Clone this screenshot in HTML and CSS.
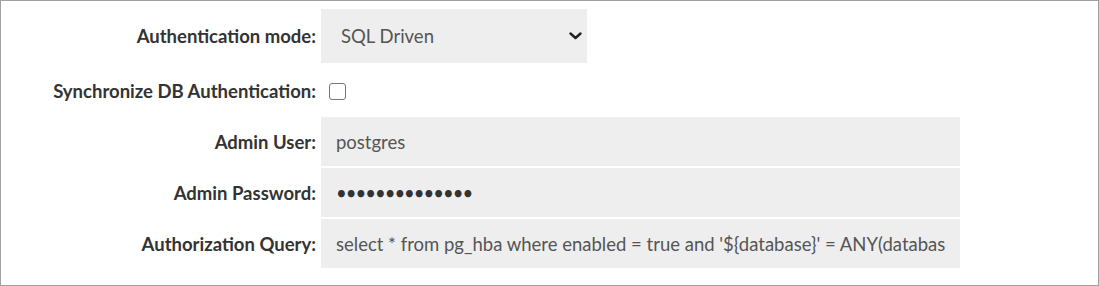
FILE: index.html
```html
<!DOCTYPE html>
<html lang="en">
<head>
<meta charset="UTF-8">
<title>Authentication Settings</title>
<link rel="stylesheet" href="styles.css">
</head>
<body>

<div class="panel">
  <form class="auth-form">
    <label class="field-label" for="authMode">Authentication mode:</label>
    <div class="select-wrap">
      <select id="authMode" class="field-select">
        <option>SQL Driven</option>
        <option>LDAP</option>
        <option>None</option>
      </select>
      <svg class="chevron" width="13" height="8" viewBox="0 0 13 8">
        <path d="M1.5 1.5 L6.5 6 L11.5 1.5" fill="none" stroke="#222" stroke-width="2.4" stroke-linecap="round" stroke-linejoin="round"/>
      </svg>
    </div>

    <label class="field-label check-label" for="syncDb">Synchronize DB Authentication:</label>
    <div class="check-cell">
      <input type="checkbox" id="syncDb" class="field-check">
    </div>

    <label class="field-label" for="adminUser">Admin User:</label>
    <input id="adminUser" class="field-input" type="text" value="postgres">

    <label class="field-label" for="adminPass">Admin Password:</label>
    <input id="adminPass" class="field-input pass-input" type="password" value="postgres123456">

    <label class="field-label" for="authQuery">Authorization Query:</label>
    <input id="authQuery" class="field-input" type="text" value="select * from pg_hba where enabled = true and '${database}' = ANY(databases) and '${user}' = ANY(users)">
  </form>
</div>

</body>
</html>
```

FILE: styles.css
```css
body {
  margin: 0;
  font-family: Lato, 'Open Sans', sans-serif;
  background: #fff;
}

/* PANEL */
.panel {
  width: 1099px;
  height: 286px;
  box-sizing: border-box;
  border: 1px solid #a0a0a0;
  padding-top: 8px;
}

/* FORM GRID */
.auth-form {
  display: grid;
  grid-template-columns: 315px 639px;
  grid-template-rows: 54px 50px 49px 49px 49px;
  column-gap: 5px;
  row-gap: 2px;
}

.field-label {
  display: flex;
  align-items: center;
  justify-content: flex-end;
  font-size: 18.5px;
  font-weight: bold;
  color: #333;
}

.check-label {
  padding-top: 2px;
}

/* SELECT */
.select-wrap {
  position: relative;
  width: 266px;
}

.field-select {
  appearance: none;
  -webkit-appearance: none;
  width: 100%;
  height: 54px;
  border: none;
  background: #eee;
  padding: 0 20px;
  font-family: inherit;
  font-size: 18.5px;
  color: #555;
  outline: none;
}

.chevron {
  position: absolute;
  right: 5px;
  top: 23px;
  pointer-events: none;
}

/* CHECKBOX */
.check-cell {
  display: flex;
  align-items: center;
  padding-left: 8px;
  padding-top: 2px;
}

.field-check {
  appearance: none;
  -webkit-appearance: none;
  width: 17px;
  height: 17px;
  margin: 0;
  border: 1.5px solid #767676;
  border-radius: 3px;
  background: #fff;
}

/* TEXT INPUTS */
.field-input {
  height: 49px;
  box-sizing: border-box;
  border: none;
  background: #eee;
  padding: 0 14px 0 15px;
  font-family: inherit;
  font-size: 18.5px;
  color: #555;
  outline: none;
}

.pass-input {
  color: #333;
  letter-spacing: -1px;
}
```
